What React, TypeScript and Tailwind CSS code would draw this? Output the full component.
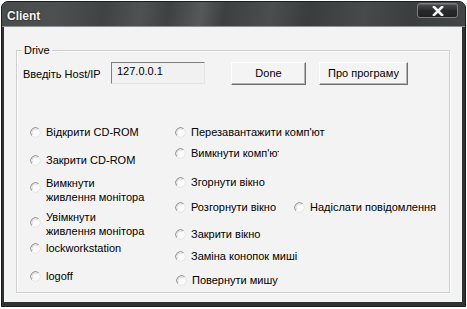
import React from "react";

function Radio() {
  return (
    <svg width="11" height="11" viewBox="0 0 11 11" className="shrink-0">
      <circle cx="5.5" cy="5.5" r="5" fill="#fbfbfb" />
      <path d="M1.6 8.6 A5 5 0 0 1 8.6 1.6" stroke="#8c8c8c" strokeWidth="1" fill="none" />
      <path d="M2.6 7.6 A3.6 3.6 0 0 1 7.6 2.6" stroke="#d8d8d8" strokeWidth="1" fill="none" />
      <path d="M9.4 2.4 A5 5 0 0 1 2.4 9.4" stroke="#e4e4e4" strokeWidth="1" fill="none" />
    </svg>
  );
}

function Item({ label, className = "" }: { label: string; className?: string }) {
  return (
    <div className={"flex items-center gap-[5px] h-[13px] " + className}>
      <Radio />
      <span className="leading-[13px] whitespace-nowrap">{label}</span>
    </div>
  );
}

function Item2({
  l1,
  l2,
  className = "",
  circleTop,
}: {
  l1: string;
  l2: string;
  className?: string;
  circleTop: string;
}) {
  return (
    <div className={"flex items-start gap-[5px] " + className}>
      <div className={circleTop}>
        <Radio />
      </div>
      <div className="leading-[14px] whitespace-nowrap">
        <div>{l1}</div>
        <div>{l2}</div>
      </div>
    </div>
  );
}

export default function App() {
  return (
    <div className="w-[467px] h-[309px] bg-white overflow-hidden font-['Liberation_Sans',Arial,sans-serif] text-[11px] text-black">
      <div className="ml-[1px] mt-[1px] w-[465px] h-[306px] flex flex-col rounded-t-[7px] border border-[#1c1d1d] bg-[#2f3232]">
        {/* Title bar */}
        <div className="h-[25px] shrink-0 flex justify-between rounded-t-[6px] border-b border-[#8f9292] bg-[linear-gradient(100deg,#4a4d4d_0%,#4d5050_12%,#404343_22%,#4f5252_30%,#3f4242_36%,#565959_43%,#3d4040_48%,#4b4e4e_58%,#3a3d3d_66%,#474a4a_78%,#3b3e3e_88%,#434646_100%)]">
          <div className="pl-[5px] pt-[7px] font-bold text-[12px] leading-[14px] text-[#f4f4f4] [text-shadow:0_0_2px_#000]">
            Client
          </div>
          <div className="pr-[7px] pt-[1px]">
            <div className="w-[41px] h-[15px] rounded-[3px] border border-[#7d8080] bg-[linear-gradient(#4a4d4d,#2a2c2c_50%,#1f2121)] flex items-center justify-center shadow-[inset_0_1px_0_#5e6161]">
              <svg width="12" height="10" viewBox="0 0 12 10">
                <path d="M2 1 L10 9 M10 1 L2 9" stroke="#f2f2f2" strokeWidth="2.6" strokeLinecap="square" />
              </svg>
            </div>
          </div>
        </div>
        {/* Client area */}
        <div className="flex-1 ml-[2px] mr-[3px] mb-[4px] bg-[#f3f3f3] pt-[23px] pl-[12px]">
          <div className="relative w-[434px] h-[243px] border border-[#d0d0d0] shadow-[inset_1px_1px_0_#ffffff,1px_1px_0_#ffffff] pl-[6px] pt-[11px]">
            <span className="absolute left-[5px] top-[-7px] px-[2px] bg-[#f3f3f3] leading-[13px]">
              Drive
            </span>
            {/* Header row */}
            <div className="flex items-center h-[23px]">
              <div className="w-[88px] pt-[1px] leading-[13px]">Введіть Host/IP</div>
              <div className="w-[94px] h-[22px] self-start border border-t-[#7f7f7f] border-l-[#7f7f7f] border-r-[#e4e4e4] border-b-[#e4e4e4] bg-[#f1f1f1] pl-[5px] pt-[2px] leading-[13px]">
                127.0.0.1
              </div>
              <button className="ml-[26px] w-[75px] h-[23px] border border-t-[#ffffff] border-l-[#ffffff] border-r-[#6e6e6e] border-b-[#6e6e6e] shadow-[inset_-1px_-1px_0_#b4b4b4] bg-[#f4f4f4] flex items-center justify-center leading-[13px]">
                Done
              </button>
              <button className="ml-[13px] w-[89px] h-[23px] border border-t-[#ffffff] border-l-[#ffffff] border-r-[#6e6e6e] border-b-[#6e6e6e] shadow-[inset_-1px_-1px_0_#b4b4b4] bg-[#f4f4f4] flex items-center justify-center leading-[13px]">
                Про програму
              </button>
            </div>
            {/* Radio section */}
            <div className="mt-[41px] ml-[7px] flex">
              <div className="w-[145px] flex flex-col">
                <Item label="Відкрити CD-ROM" />
                <Item label="Закрити CD-ROM" className="mt-[15px]" />
                <Item2 l1="Вимкнути" l2="живлення монітора" className="mt-[9px]" circleTop="mt-[6px]" />
                <Item2 l1="Увімкнути" l2="живлення монітора" className="mt-[6px]" circleTop="mt-[7px]" />
                <Item label="lockworkstation" className="mt-[4px]" />
                <Item label="logoff" className="mt-[15px]" />
              </div>
              <div className="flex flex-col">
                <Item label="Перезавантажити комп'ют" />
                <div className="flex items-center gap-[5px] h-[13px] mt-[8px]">
                  <Radio />
                  <span className="leading-[13px] whitespace-nowrap overflow-hidden w-[88px]">
                    Вимкнути комп'ют
                  </span>
                </div>
                <Item label="Згорнути вікно" className="mt-[16px]" />
                <div className="flex mt-[12px]">
                  <Item label="Розгорнути вікно" className="w-[119px]" />
                  <Item label="Надіслати повідомлення" />
                </div>
                <Item label="Закрити вікно" className="mt-[14px]" />
                <Item label="Заміна конопок миші" className="mt-[9px]" />
                <Item label="Повернути мишу" className="mt-[11px] ml-[1px]" />
              </div>
            </div>
          </div>
        </div>
      </div>
    </div>
  );
}
